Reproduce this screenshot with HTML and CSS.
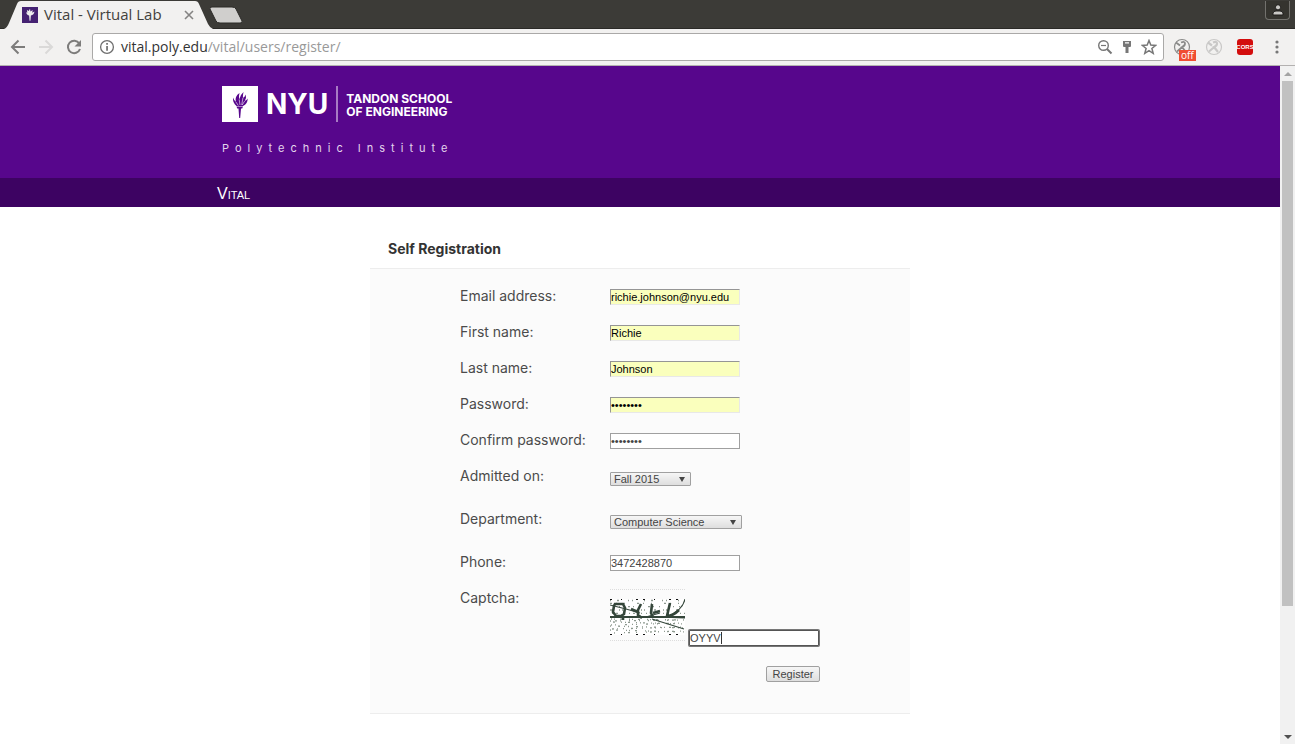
FILE: index.html
```html
<!DOCTYPE html>
<html lang="en">
<head>
<meta charset="utf-8">
<title>Vital - Virtual Lab</title>
<link rel="stylesheet" href="styles.css">
</head>
<body>
<div class="tabstrip">
  <svg class="tab-shape" width="246" height="29" viewBox="0 0 246 29" aria-hidden="true">
    <path d="M4 29Q7 28 9 23L17 4Q18 1 21 1H195Q198 1 199 4L208 24Q210 28 213 29Z" fill="#f2f1f0"/>
    <path d="M210 9Q209 7 212 7H232Q235 7 236 9L242 21Q243 23 240 23H220Q217 23 216 21Z" fill="#d0cfcd" stroke="#2b2a27"/>
  </svg>
  <div class="tab">
    <svg width="16" height="16" viewBox="0 0 36 36" aria-hidden="true"><path fill="#452272" d="M0 0h36v36H0z"/><path fill="#eee" d="M9 12q2 7 7 7l1 12h2l1-12q7-1 8-9l-5 3 1-6-5 3-1-6-3 5-4-2 1 6z"/></svg>
    <span class="tab-title">Vital - Virtual Lab</span>
    <button class="plain" aria-label="Close tab"><svg width="10" height="10" viewBox="0 0 10 10"><path d="M1 1l8 8M9 1l-8 8" stroke="#858483" stroke-width="1.6"/></svg></button>
  </div>
  <button class="profile" aria-label="Profile"><svg width="12" height="12" viewBox="0 0 12 12"><circle cx="6" cy="3.3" r="2.6" fill="#c9c8c5" stroke="#1e1d1b"/><path d="M1 11V9Q1.500 7 4 7h4q2.500 0 3 2v2z" fill="#c9c8c5" stroke="#1e1d1b"/></svg></button>
</div>
<div class="toolbar">
  <button class="plain" aria-label="Back"><svg width="16" height="16" viewBox="0 0 16 16" fill="none" stroke="#7d7c7b" stroke-width="2"><path d="M15 8H2M8.500 1.500L2 8l6.500 6.500"/></svg></button>
  <button class="plain" aria-label="Forward"><svg width="16" height="16" viewBox="0 0 16 16" fill="none" stroke="#dad9d8" stroke-width="2"><path d="M1 8h13M7.500 1.500L14 8l-6.500 6.500"/></svg></button>
  <button class="plain" aria-label="Reload"><svg width="16" height="16" viewBox="0 0 16 16"><path d="M13.300 4.500A6.200 6.200 0 1 0 14 10" fill="none" stroke="#7d7c7b" stroke-width="2"/><path d="M15 1v6.500H8.500z" fill="#7d7c7b"/></svg></button>
  <div class="omnibox">
    <svg width="16" height="16" viewBox="0 0 16 16"><circle cx="8" cy="8" r="6.400" fill="none" stroke="#6e6e6e" stroke-width="1.300"/><path d="M7.200 7h1.700v4.700H7.200zM7.200 4h1.700v1.700H7.200z" fill="#6e6e6e"/></svg>
    <div class="url" role="textbox" aria-label="Address"><span class="host">vital.poly.edu</span>/vital/users/register/</div>
    <button class="plain" aria-label="Zoom"><svg width="16" height="16" viewBox="0 0 16 16" fill="none" stroke="#777"><circle cx="6.500" cy="6.500" r="4.800" stroke-width="1.400"/><path d="M4 6.500h5" stroke-width="1.200"/><path d="M10 10l4.500 4.500" stroke-width="2"/></svg></button>
    <button class="plain" aria-label="Saved passwords"><svg width="16" height="16" viewBox="0 0 16 16"><path fill="#777" fill-rule="evenodd" d="M4 2h8v5q0 1-1 1H9.500v6h-3V8H5Q4 8 4 7zm2 1.300v1.200h4V3.300z"/></svg></button>
    <button class="plain" aria-label="Bookmark"><svg width="16" height="16" viewBox="0 0 16 16"><path fill="none" stroke="#777" stroke-width="1.500" d="M8 1.500l1.800 4.600 4.900.3-3.800 3.100 1.300 4.800L8 11.600l-4.200 2.700 1.300-4.800L1.300 6.400l4.900-.3z"/></svg></button>
  </div>
  <div class="extensions">
    <button class="plain ext" aria-label="Extension off"><svg width="18" height="18" viewBox="0 0 18 18" fill="none" stroke="#8a8a89"><circle cx="9" cy="9" r="7.500" stroke-width="1.200"/><path d="M3 4.500l4 3M4 13.500l7-6M8 4.500q4-1.500 4 1t-3 3.500l4 5" stroke-width="1.800"/></svg><span class="badge">off</span></button>
    <button class="plain" aria-label="Extension"><svg width="18" height="18" viewBox="0 0 18 18" fill="none" stroke="#c9c8c7"><circle cx="9" cy="9" r="7.500" stroke-width="1.200"/><path d="M3 4.500l4 3M4 13.500l7-6M8 4.500q4-1.500 4 1t-3 3.500l4 5" stroke-width="2.200"/></svg></button>
    <button class="plain cors">CORS</button>
    <button class="plain" aria-label="Menu"><svg width="4" height="16" viewBox="0 0 4 16" fill="#777"><circle cx="2" cy="3" r="1.600"/><circle cx="2" cy="8" r="1.600"/><circle cx="2" cy="13" r="1.600"/></svg></button>
  </div>
</div>
<div class="viewport">
  <div class="page">
    <header class="banner">
      <div class="wrap">
        <div class="logo">
          <svg width="36" height="36" viewBox="0 0 36 36" aria-hidden="true"><path fill="#fff" d="M0 0h36v36H0z"/><g fill="#57068c"><path d="M14.500 20.500h6.500l-.8 2H19L18.200 32h-1L16.500 22.500h-1.300z"/><path d="M14.500 20Q10.500 17 11 11.500q.8 2.500 2.800 4.300Q12.500 10.500 17.500 7q-1 3.500-.3 6.500Q18 9 21.500 6q-.8 3.500-.6 6 2.300-1.500 2.800-3.500 1 3-1 6.500 2-.8 3-2.500 0 5.500-4.700 7.500z"/></g><path d="M13.800 15.800l2.500 3.700M17.200 13.500l.8 5.500M20.900 12l-1.200 7M22.700 15l-2.500 4" stroke="#fff" stroke-width=".6"/></svg>
          <span class="nyu">NYU</span>
          <div class="school"><div>TANDON SCHOOL</div><div>OF ENGINEERING</div></div>
        </div>
        <div class="institute">Polytechnic Institute</div>
      </div>
    </header>
    <nav class="nav"><div class="wrap"><a href="#">Vital</a></div></nav>
    <main class="panel">
      <h1>Self Registration</h1>
      <form class="form">
        <div class="row"><label for="email">Email address:</label><input class="field filled" id="email" type="text" value="richie.johnson@nyu.edu"></div>
        <div class="row"><label for="first">First name:</label><input class="field filled" id="first" type="text" value="Richie"></div>
        <div class="row"><label for="last">Last name:</label><input class="field filled" id="last" type="text" value="Johnson"></div>
        <div class="row"><label for="pw">Password:</label><input class="field filled" id="pw" type="password" value="password"></div>
        <div class="row"><label for="pw2">Confirm password:</label><input class="field" id="pw2" type="password" value="password"></div>
        <div class="row tall"><label for="term">Admitted on:</label><span class="pick term"><select id="term"><option>Fall 2015</option></select></span></div>
        <div class="row tall"><label for="dept">Department:</label><span class="pick dept"><select id="dept"><option>Computer Science</option></select></span></div>
        <div class="row"><label for="phone">Phone:</label><input class="field" id="phone" type="text" value="3472428870"></div>
        <div class="row captcha-row"><label for="captcha">Captcha:</label>
          <div class="captcha">
            <svg width="75" height="36" viewBox="0 0 75 36" role="img" aria-label="Captcha image"><path fill="#fff" d="M0 0h75v36H0z"/>
              <g stroke="#8d998f" fill="none" stroke-width="1.300"><path d="M0 1.500h75" stroke-dasharray="1 6 2 9 1 3 1 11"/><path d="M0 4.300h75" stroke-dasharray="2 4 1 7 1 12"/><path d="M3 7.700h72" stroke-dasharray="1 5 1 8 2 3"/><path d="M0 11h75" stroke-dasharray="2 7 1 2 1 9"/><path d="M2 14.300h73" stroke-dasharray="1 3 2 6 1 4"/><path d="M1 20l74 1" stroke-dasharray="1 2 1 5 2 7"/><path d="M0 22l75-1" stroke-dasharray="1 4 2 3 1 8"/><path d="M3 23l72 2" stroke-dasharray="2 6 1 3 1 2"/><path d="M1 26l74-2" stroke-dasharray="1 3 1 9 2 5"/><path d="M0 27l75 2" stroke-dasharray="1 7 2 4 1 3"/><path d="M2 30l73-2" stroke-dasharray="2 3 1 5 1 7"/><path d="M0 31l75 2" stroke-dasharray="1 5 2 8 1 2"/><path d="M4 34l71-2" stroke-dasharray="1 9 1 3 2 6"/></g>
              <path d="M0 .5h75M0 35.500h75" stroke="#111" stroke-dasharray="2 9 1 14 2 5"/>
              <g stroke="#34463a" fill="none"><path d="M5 5h8l2 4-1 6-3 2H6l-3-4 1-6z" stroke-width="2.600"/><path d="M13 17v4M21 10l7 3M31 5l-3 6v5l4 3M42 5l-1 9 2 4M43 14l7-2M60 4l-3 13q6 0 12-6" stroke-width="2.600"/><path d="M0 18h75" stroke-width="2"/><path d="M0 6l16 4 14 4M36 18l14-4M42 20l32 10M57 18Q73 11 75 0M48 18l27 1" stroke-width="1.100"/></g></svg>
          </div>
          <span class="answer"><input class="field" id="captcha" type="text" value="OYYV"><span class="caret"></span></span>
        </div>
        <div class="actions"><button type="submit" class="register">Register</button></div>
      </form>
    </main>
  </div>
  <div class="scrollbar" aria-hidden="true"><i class="up"></i><div class="track"><div class="thumb"></div></div><i class="down"></i></div>
</div>
</body>
</html>
```
FILE: styles.css
```css
* { box-sizing: border-box; }
html, body { height: 100%; }
body {
  margin: 0;
  display: flex;
  flex-direction: column;
  background: #fff;
  color: #444;
  font-family: "Liberation Sans", Arial, sans-serif;
}
svg { display: block; flex: none; }
.plain { display: block; padding: 0; border: 0; background: none; flex: none; }

.tabstrip {
  position: relative;
  display: flex;
  justify-content: space-between;
  height: 29px;
  flex: none;
  background: #3c3b37;
  box-shadow: inset 0 -1px #2b2a27;
}
.tab-shape { position: absolute; left: 0; top: 0; }
.tab {
  position: relative;
  display: flex;
  align-items: center;
  width: 194px;
  padding-left: 22px;
  color: #43413e;
  font: 15px/29px "Open Sans", sans-serif;
}
.tab-title { flex: 1; padding-left: 6px; white-space: nowrap; }
.profile {
  display: grid;
  place-items: center;
  width: 25px;
  height: 19px;
  margin: 1px 5px 0 0;
  padding: 0;
  border: 1px solid #73726e;
  border-top: 0;
  border-radius: 0 0 4px 4px;
  background: #35342f;
}
.toolbar {
  display: flex;
  align-items: center;
  gap: 12px;
  height: 37px;
  flex: none;
  padding: 0 16px 0 10px;
  background: #f2f1f0;
  border-bottom: 1px solid #b3b1b0;
}
.omnibox {
  display: flex;
  align-items: center;
  gap: 6px;
  flex: 1;
  height: 28px;
  margin-left: -2px;
  padding: 0 6px;
  background: #fff;
  border: 1px solid #aaa9a8;
  border-radius: 3px;
}
.url { flex: 1; color: #999; font: 14px/24px "Open Sans", sans-serif; }
.host { color: #333; }
.extensions { display: flex; align-items: center; gap: 14px; margin-left: -3px; }
.ext { position: relative; }
.badge {
  position: absolute;
  left: 6px;
  top: 12px;
  padding: 0 2px;
  background: #f04d32;
  color: #fff;
  font: 10px/11px "Open Sans", sans-serif;
}
.cors {
  width: 16px;
  height: 16px;
  margin-right: 8px;
  border-radius: 3px;
  background: #d30d0d;
  color: #fff;
  font: bold 6px/16px "Liberation Sans", sans-serif;
  white-space: nowrap;
  display: flex;
  justify-content: center;
}

.viewport { display: flex; flex: 1; min-height: 0; }
.page { flex: 1; overflow: hidden; }
.wrap { width: 846px; max-width: 100%; margin: 0 auto; }
.banner { background: #57068c; color: #fff; padding: 20px 0 22px; }
.banner .wrap { padding-left: 5px; }
.logo { display: flex; align-items: center; }
.nyu { padding: 0 8px; font: bold 28px/36px Inter, sans-serif; }
.school {
  padding: 6px 0 4px 8px;
  border-left: 2px solid #a87bc4;
  font: bold 12px/13px Inter, sans-serif;
}
.institute {
  padding-top: 18px;
  color: #e3d5ec;
  font: 11px/16px Inter, sans-serif;
  letter-spacing: 6px;
}
.nav { background: #3d0362; }
.nav a {
  display: block;
  padding-top: 2px;
  color: #fff;
  font-size: 16px;
  line-height: 27px;
  font-variant: small-caps;
  text-decoration: none;
}

.panel { width: 540px; max-width: 100%; margin: 0 auto; }
h1 {
  margin: 0;
  padding: 32px 18px 10px;
  color: #333;
  font: bold 14px/19px Inter, sans-serif;
}
.form {
  padding: 18px 90px 31px;
  background: #fbfbfb;
  border: solid #ededed;
  border-width: 1px 0;
}
.row { display: flex; align-items: flex-start; height: 36px; }
.row.tall { height: 43px; }
.row.captcha-row { height: auto; }
label { width: 150px; flex: none; color: #4b4b4b; font: 14px/17px Inter, sans-serif; }
.field {
  width: 130px;
  height: 16px;
  margin: 2px 0 0;
  padding: 0;
  border: 1px solid #a0a0a0;
  border-radius: 0;
  background: #fff;
  color: #444;
  font: 11px/14px "Liberation Sans", Arial, sans-serif;
  outline: 0;
}
.filled {
  background: #faffbd;
  border-color: #959595 #e8e8e8 #e8e8e8 #959595;
  color: #000;
}
.pick { position: relative; margin-top: 5px; display: block; }
.term { width: 81px; }
.dept { width: 132px; }
.pick::after {
  content: "";
  position: absolute;
  right: 6px;
  top: 5px;
  border: solid transparent;
  border-width: 5px 3px 0;
  border-top-color: #444;
}
select {
  display: block;
  appearance: none;
  width: 100%;
  height: 14px;
  padding: 0 3px;
  border: 1px solid #a0a0a0;
  border-radius: 1px;
  background: linear-gradient(#f6f6f6, #dedede);
  color: #444;
  font: 11px/12px "Liberation Sans", Arial, sans-serif;
}
.captcha { padding: 9px 0 5px; border: dotted #ddd; border-width: 1px 0; }
.answer { position: relative; margin: 39px 0 0 4px; }
.answer .field { display: block; border-color: #555; box-shadow: 0 0 0 1px #777; border-radius: 1px; }
.caret { position: absolute; left: 32px; top: 4px; width: 1px; height: 12px; background: #333; }
.actions { display: flex; justify-content: flex-end; padding-top: 20px; }
.register {
  width: 54px;
  height: 16px;
  padding: 0;
  border: 1px solid #a0a0a0;
  border-radius: 2px;
  background: linear-gradient(#f6f6f6, #dedede);
  color: #444;
  font: 11px/14px "Liberation Sans", Arial, sans-serif;
}

.scrollbar { display: flex; flex-direction: column; width: 15px; flex: none; background: #f1f1f1; }
.track { flex: 1; padding: 0 2px; }
.thumb { height: 81%; background: #c1c1c1; }
.up, .down { height: 15px; display: grid; place-items: center; }
.up::before, .down::before { content: ""; border: 4px solid transparent; }
.up::before { border-top: 0; border-bottom-color: #a3a3a3; }
.down::before { border-bottom: 0; border-top-color: #505050; }
```
